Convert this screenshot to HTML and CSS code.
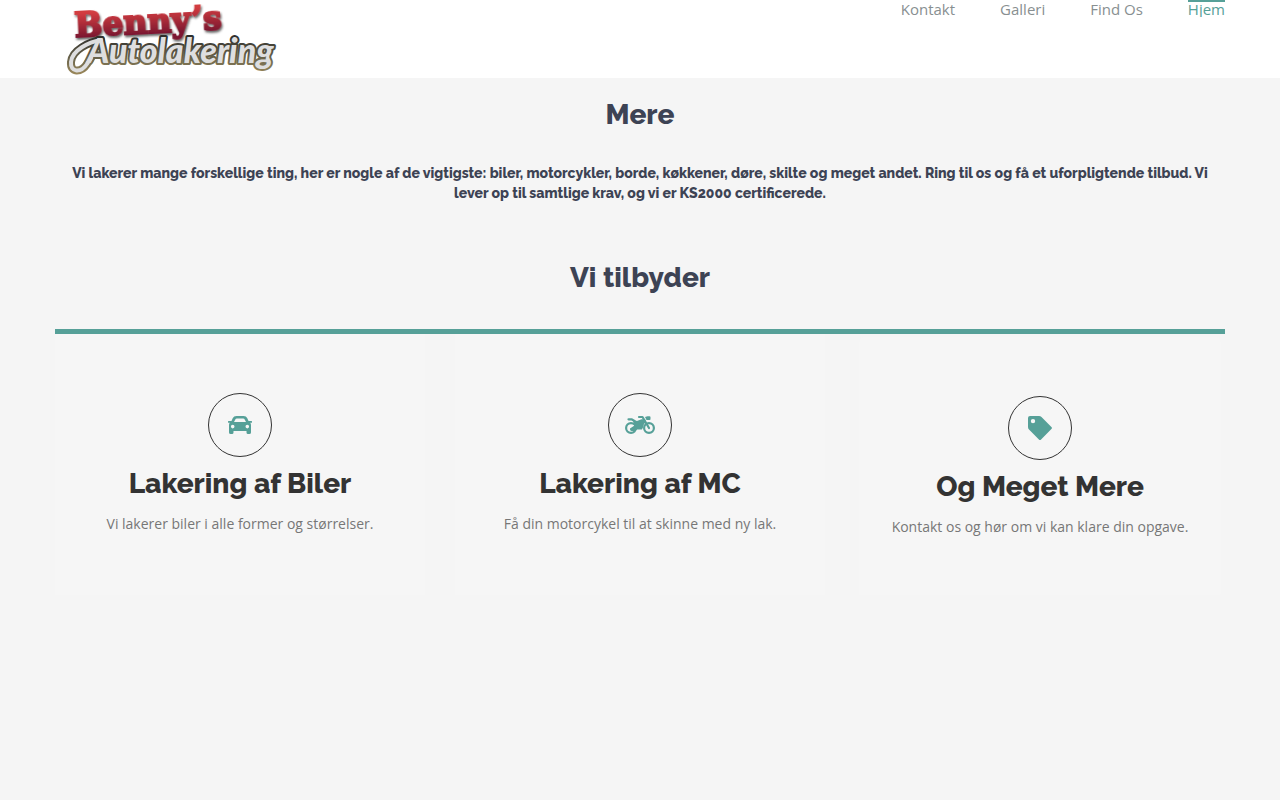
FILE: index.html
```html
<!DOCTYPE html>
<html lang="da">
  <head>
    <meta charset="utf-8">
    <meta name="viewport" content="width=device-width, initial-scale=1">
    <title>Benny's Autolakering</title>
    <link rel="stylesheet" href="styles.css">
  </head>
  <body>
    <header class="header">
      <div class="container header-inner">
        <a class="logo" href="#">
          <svg width="240" height="78" viewBox="0 0 240 78" role="img" aria-label="Benny's Autolakering">
            <defs>
              <linearGradient id="red" x1="0" y1="0" x2="0" y2="1">
                <stop offset="0.2" stop-color="#d23c40"/>
                <stop offset="0.8" stop-color="#7d1830"/>
              </linearGradient>
              <linearGradient id="edge" gradientUnits="userSpaceOnUse" x1="0" y1="36" x2="0" y2="76">
                <stop offset="0" stop-color="#2e2e2c"/>
                <stop offset="0.6" stop-color="#6f684e"/>
                <stop offset="1" stop-color="#a08c5c"/>
              </linearGradient>
              <filter id="shadow" x="-10%" y="-10%" width="120%" height="140%">
                <feDropShadow dx="1" dy="2" stdDeviation="1" flood-color="#222" flood-opacity="0.7"/>
              </filter>
            </defs>
            <text class="logo-top" x="20" y="37" transform="rotate(-3 20 37)" filter="url(#shadow)">Benny’s</text>
            <path class="swash-edge" d="M46 40C34 42 17 50 16 62C15 73 26 73 32 64L36 58"/>
            <text class="logo-bottom" x="32" y="63">Autolakering</text>
            <path class="swash" d="M46 40C34 42 17 50 16 62C15 73 26 73 32 64L36 58"/>
          </svg>
        </a>
        <nav>
          <ul class="menu">
            <li><a href="#">Kontakt</a></li>
            <li><a href="#">Galleri</a></li>
            <li><a href="#">Find Os</a></li>
            <li><a class="active" href="#">Hjem</a></li>
          </ul>
        </nav>
      </div>
    </header>

    <main class="container">
      <section class="intro">
        <h2>Mere</h2>
        <h5>Vi lakerer mange forskellige ting, her er nogle af de vigtigste: biler, motorcykler, borde, køkkener, døre, skilte og meget andet. Ring til os og få et uforpligtende tilbud. Vi lever op til samtlige krav, og vi er KS2000 certificerede.</h5>
        <h2>Vi tilbyder</h2>
      </section>

      <section class="services">
        <div class="service">
          <div class="icon">
            <svg width="24" height="24" viewBox="0 0 24 24">
              <path fill-rule="evenodd" d="M8.500 3H15.500Q18.300 3 19.300 5.300L20.500 8H23.500Q24 8 24 8.500V9.300Q24 9.800 23.500 9.800H22.200Q23 10.700 23 12V19.500Q23 21 21.300 21H20Q18.500 21 18.500 19.500V18H5.500V19.500Q5.500 21 4 21H2.700Q1 21 1 19.500V12Q1 10.700 1.800 9.800H.5Q0 9.800 0 9.300V8.500Q0 8 .5 8H3.500L4.700 5.300Q5.700 3 8.500 3ZM8.800 5.500Q7.800 5.500 7.300 6.400L6 9H18L16.700 6.400Q16.200 5.500 15.200 5.500ZM4.700 11.800A1.800 1.800 0 1 0 4.700 15.400A1.800 1.800 0 1 0 4.700 11.800ZM19.300 11.800A1.800 1.800 0 1 0 19.300 15.400A1.800 1.800 0 1 0 19.300 11.800Z"/>
            </svg>
          </div>
          <h3>Lakering af Biler</h3>
          <p>Vi lakerer biler i alle former og størrelser.</p>
        </div>
        <div class="service">
          <div class="icon">
            <svg width="30" height="24" viewBox="0 0 30 24">
              <g fill="none" stroke="#56a098" stroke-width="2.200" stroke-linecap="round" stroke-linejoin="round">
                <circle cx="6" cy="15" r="4.900"/>
                <circle cx="24" cy="15" r="4.900"/>
                <path d="M14 4H17.500L19 6.500L24 15M3.500 6.300H6.500L9.500 8"/>
              </g>
              <path d="M9 7L12 8L16.500 6.200H20L21.200 8.800Q18.500 10.500 18.200 14L17 16.500H12L10 18H6.500Q4.500 17.500 5 15.500L9.500 12.500Q9.500 10 8 9ZM20 4L22.500 3.200H24.500Q25.500 3.200 25.500 4.200V6.200Q25.500 7 24.500 7H21.500Z"/>
            </svg>
          </div>
          <h3>Lakering af MC</h3>
          <p>Få din motorcykel til at skinne med ny lak.</p>
        </div>
        <div class="service service-inset">
          <div class="icon">
            <svg width="24" height="24" viewBox="0 0 24 24">
              <path fill-rule="evenodd" d="M2 0H11Q12.500 0 13.500 1L23.400 10.900Q24.500 12 23.400 13.100L13.100 23.400Q12 24.500 10.900 23.400L1 13.500Q0 12.500 0 11V2Q0 0 2 0ZM5 2.900A2.200 2.200 0 1 0 5 7.300A2.200 2.200 0 1 0 5 2.900Z"/>
            </svg>
          </div>
          <h3>Og Meget Mere</h3>
          <p>Kontakt os og hør om vi kan klare din opgave.</p>
        </div>
      </section>
    </main>
  </body>
</html>
```
FILE: styles.css
```css
* {
  box-sizing: border-box;
}
body {
  margin: 0;
  background: #f5f5f5;
  font-family: "Open Sans", sans-serif;
  font-size: 14px;
  color: #777;
}
.container {
  max-width: 1170px;
  margin: 0 auto;
}
.header {
  background: #fff;
}
.header-inner {
  display: flex;
  justify-content: space-between;
  align-items: flex-start;
}
.logo svg {
  display: block;
}
.logo-top {
  font: bold 33px "DejaVu Serif", serif;
  fill: url(#red);
  stroke: url(#red);
  stroke-width: 2;
}
.logo-bottom {
  font: italic 900 34px Lato, sans-serif;
  fill: #dededf;
  stroke: url(#edge);
  stroke-width: 4;
  stroke-linejoin: round;
  paint-order: stroke;
}
.swash-edge,
.swash {
  fill: none;
  stroke: url(#edge);
  stroke-width: 8;
  stroke-linecap: round;
}
.swash {
  stroke: #dededf;
  stroke-width: 4;
}
.menu {
  display: flex;
  gap: 45px;
  margin: 0;
  padding: 0;
  list-style: none;
}
.menu a {
  display: block;
  border-top: 2px solid transparent;
  font-size: 15px;
  line-height: 15px;
  color: #888f91;
  text-decoration: none;
}
.menu .active {
  border-color: #56a098;
  overflow: hidden;
  color: #56a098;
}
h2,
h3,
h5 {
  margin: 0;
  font-family: Raleway, Lato, sans-serif;
  font-weight: 800;
  font-variant-numeric: oldstyle-nums;
}
h2,
h3 {
  font-size: 28px;
  line-height: 32px;
}
.intro {
  padding: 21px 10px 35px;
  text-align: center;
  color: #3d4354;
}
h5 {
  padding: 32px 0 59px;
  font-size: 14px;
  line-height: 20px;
}
.services {
  display: grid;
  grid-template-columns: repeat(auto-fit, minmax(300px, 1fr));
  gap: 30px;
  border-top: 5px solid #56a098;
}
.service {
  padding: 59px 15px;
  background: #f6f6f6;
  text-align: center;
}
.service-inset {
  margin: 3px 4px -3px;
  border-radius: 5px;
}
.icon {
  display: flex;
  align-items: center;
  justify-content: center;
  width: 64px;
  height: 64px;
  margin: 0 auto 11px;
  border: 1px solid #333;
  border-radius: 50%;
  fill: #56a098;
}
h3 {
  color: #333;
}
.service p {
  margin: 12px 0 0;
  line-height: 24px;
}
```
